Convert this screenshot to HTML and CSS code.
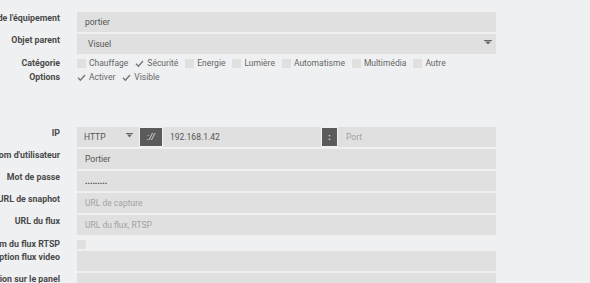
FILE: index.html
```html
<!DOCTYPE html>
<html>
<head>
  <meta charset="utf-8">
  <title>Équipement caméra</title>
  <link rel="stylesheet" href="styles.css">
</head>
<body>
  <form class="eq-form">
    <div class="row">
      <label class="lbl">Nom de l'équipement</label>
      <input class="field" type="text" value="portier">
    </div>
    <div class="row">
      <label class="lbl">Objet parent</label>
      <div class="field select select-wide">
        <span>Visuel</span>
        <svg class="caret" width="8" height="5" viewBox="0 0 8 5"><rect x="0" y="0" width="8" height="1"/><polygon points="1,1.5 7,1.5 4,4.5"/></svg>
      </div>
    </div>
    <div class="row row-check">
      <label class="lbl">Catégorie</label>
      <div class="checks">
        <span class="check"><span class="box"></span>Chauffage</span>
        <span class="check"><svg class="tick" width="9" height="9" viewBox="0 0 9 9"><path d="M1 4.8 L3.4 7.2 L8 2"/></svg>Sécurité</span>
        <span class="check"><span class="box"></span>Energie</span>
        <span class="check"><span class="box"></span>Lumière</span>
        <span class="check"><span class="box"></span>Automatisme</span>
        <span class="check"><span class="box"></span>Multimédia</span>
        <span class="check"><span class="box"></span>Autre</span>
      </div>
    </div>
    <div class="row row-check">
      <label class="lbl">Options</label>
      <div class="checks">
        <span class="check"><svg class="tick" width="9" height="9" viewBox="0 0 9 9"><path d="M1 4.8 L3.4 7.2 L8 2"/></svg>Activer</span>
        <span class="check"><svg class="tick" width="9" height="9" viewBox="0 0 9 9"><path d="M1 4.8 L3.4 7.2 L8 2"/></svg>Visible</span>
      </div>
    </div>

    <div class="spacer"></div>

    <div class="row">
      <label class="lbl">IP</label>
      <div class="group">
        <div class="field select select-proto">
          <span>HTTP</span>
          <svg class="caret" width="7" height="5" viewBox="0 0 7 5"><rect x="0" y="0" width="7" height="1"/><polygon points="1,1.5 6,1.5 3.5,4.5"/></svg>
        </div>
        <span class="addon addon-proto">://</span>
        <input class="field field-ip" type="text" value="192.168.1.42">
        <span class="addon addon-colon">:</span>
        <input class="field field-port" type="text" placeholder="Port">
      </div>
    </div>
    <div class="row">
      <label class="lbl">Nom d'utilisateur</label>
      <input class="field" type="text" value="Portier">
    </div>
    <div class="row">
      <label class="lbl">Mot de passe</label>
      <input class="field field-pass" type="text" value=".........">
    </div>
    <div class="row">
      <label class="lbl">URL de snaphot</label>
      <input class="field" type="text" placeholder="URL de capture">
    </div>
    <div class="row">
      <label class="lbl">URL du flux</label>
      <input class="field" type="text" placeholder="URL du flux, RTSP">
    </div>
    <div class="row row-single">
      <label class="lbl">Stream du flux RTSP</label>
      <div class="checks"><span class="box"></span></div>
    </div>
    <div class="row">
      <label class="lbl">Option flux video</label>
      <input class="field" type="text">
    </div>
    <div class="row">
      <label class="lbl">Position sur le panel</label>
      <input class="field" type="text">
    </div>
  </form>
</body>
</html>
```

FILE: styles.css
```css
body {
  margin: 0;
  background-color: #eff0f1;
  font-family: Roboto, "Liberation Sans", sans-serif;
  font-size: 8.5px;
  color: #555;
  overflow: hidden;
}

.eq-form {
  padding-top: 12px;
}

.row {
  display: flex;
  gap: 17px;
  margin-bottom: 2px;
}

.lbl {
  flex: none;
  width: 60px;
  display: flex;
  justify-content: flex-end;
  white-space: nowrap;
  font-weight: bold;
  font-size: 8.8px;
  color: #4a4a4a;
  line-height: 10px;
  padding-top: 1px;
}

.field {
  box-sizing: border-box;
  width: 419px;
  height: 20px;
  margin: 0;
  border: none;
  background-color: #dfe0df;
  padding: 0 8px;
  font-family: inherit;
  font-size: 8.5px;
  color: #555;
  outline: none;
}

.field::placeholder {
  color: #a3a3a3;
}

.field-pass {
  font-weight: bold;
  color: #444;
}

.select {
  display: flex;
  align-items: center;
  justify-content: space-between;
}

.select-wide {
  padding: 0 4px 0 11px;
}

.caret {
  fill: #666;
  margin-bottom: 3px;
}

.row-check {
  height: 14px;
  margin-bottom: 0;
  align-items: center;
}

.row-check .lbl {
  padding-top: 0;
}

.checks {
  display: flex;
  align-items: center;
  gap: 7px;
  color: #666;
}

.check {
  display: flex;
  align-items: center;
  gap: 3px;
}

.box {
  display: inline-block;
  width: 9px;
  height: 9px;
  background-color: #dfe0df;
}

.tick {
  fill: none;
  stroke: #777;
  stroke-width: 1.4;
}

.spacer {
  height: 43px;
}

.group {
  display: flex;
  width: 419px;
}

.group .select-proto {
  width: 62px;
  flex: none;
  padding: 0 6px 0 7px;
}

.addon {
  box-sizing: border-box;
  flex: none;
  height: 20px;
  display: flex;
  align-items: center;
  justify-content: center;
  background-color: #5b5b5b;
  border: 1px solid #f2f2f2;
  color: #eee;
}

.addon-proto {
  width: 24px;
  font-style: italic;
}

.addon-colon {
  width: 17px;
  font-weight: bold;
}

.group .field-ip {
  width: 158px;
  flex: none;
  padding-left: 7px;
}

.group .field-port {
  width: auto;
  flex: 1;
  min-width: 0;
}

.row-single {
  height: 14px;
  margin-bottom: 0;
  align-items: center;
}

.row-single .lbl {
  padding-top: 0;
}

.row-single .checks {
  padding-top: 1px;
}
```
